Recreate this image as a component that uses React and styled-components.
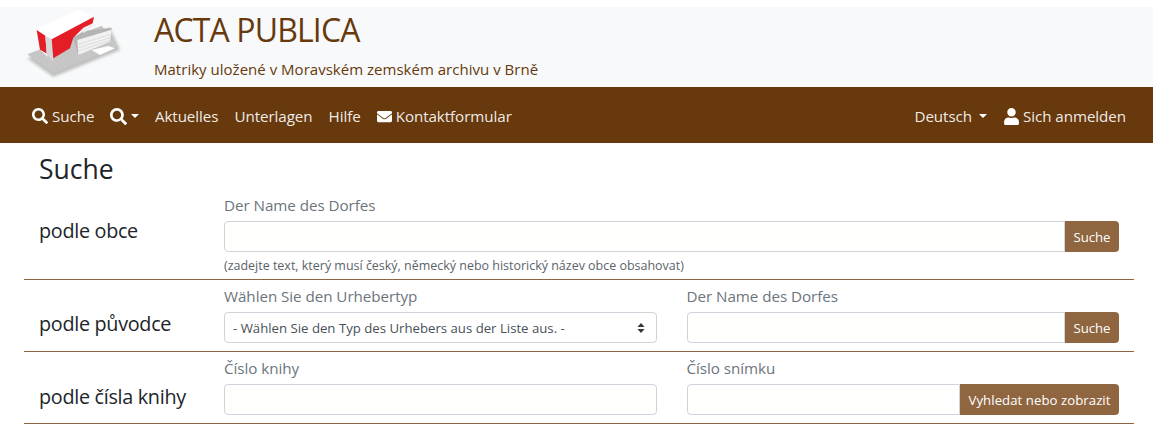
import React from "react";
import styled, { createGlobalStyle } from "styled-components";
import { FaSearch, FaEnvelope, FaUser } from "react-icons/fa";

const Global = createGlobalStyle`
  html, body { margin: 0; padding: 0; background: #fff; }
  body { font-family: "Open Sans", "Noto Sans", sans-serif; font-size: 16px; color: #212529; overflow: hidden; }
  * { box-sizing: border-box; }
`;
const Page = styled.div`width: 1153px; height: 432px; padding-top: 7px; overflow: hidden;`;
const Header = styled.header`height: 80px; background: #f8f9fa; display: flex; padding-left: 20px;`;
const LogoBox = styled.div`width: 134px; height: 80px; flex: none;`;
const Brand = styled.div`color: #67390d; padding-top: 2px;`;
const Title = styled.h1`margin: 0; font-size: 32px; line-height: 42px; font-weight: 400; letter-spacing: -0.85px;`;
const Sub = styled.div`font-size: 15px; line-height: 20px; margin-top: 8px; letter-spacing: 0.02px;`;
const Nav = styled.nav`height: 56px; background: #67390d; display: flex; align-items: center; justify-content: space-between; padding: 2px 27px 0 32px; color: #fff;`;
const NavGroup = styled.div`display: flex; align-items: center; gap: 16px;`;
const NavItem = styled.a`display: flex; align-items: center; gap: ${p => p.$gap ?? 4}px; font-size: 15.2px; letter-spacing: -0.08px; color: rgba(255,255,255,.92); white-space: nowrap;
  svg { font-size: ${p => p.$icon || 16}px; color: #fff; }`;
const Caret = styled.span`display: inline-block; margin-left: ${p => p.$gap || 0}px; border-top: 4.8px solid #fff; border-left: 4.8px solid transparent; border-right: 4.8px solid transparent;`;
const Main = styled.main`padding: 0 19px 0 24px;`;
const H2 = styled.h2`margin: 0; padding-left: 15px; font-size: 26.5px; line-height: 36px; font-weight: 400; padding-top: 8px; height: 45px;`;
const Row = styled.section`display: flex; height: ${p => p.$h}px; border-bottom: 1px solid #8f6640; width: 1110px;`;
const RowTitle = styled.div`width: 200px; flex: none; padding: ${p => p.$top}px 0 0 15px; font-size: 19.8px; line-height: 26px; letter-spacing: -0.3px;`;
const Fields = styled.div`flex: 1; display: flex; gap: 30px; padding-right: 15px;`;
const Field = styled.div`flex: 1 1 0; min-width: 0; padding-top: ${p => p.$top}px;`;
const Label = styled.div`font-size: 15.2px; line-height: 20px; color: #6c757d; letter-spacing: -0.05px; margin-bottom: 6px;`;
const InputGroup = styled.div`display: flex; height: 31px;`;
const Input = styled.input`flex: 1; min-width: 0; height: 31px; width: ${p => p.$alone ? "100%" : "auto"}; display: block; border: 1px solid #ced4da; border-radius: ${p => p.$alone ? "4px" : "4px 0 0 4px"}; background: #fffffd; padding: 0 8px;`;
const Btn = styled.button`flex: none; height: 31px; padding: 0 8.5px; border: 0; border-radius: 0 4px 4px 0; background: #8f6640; color: #fff; font: inherit; font-size: 13.2px; letter-spacing: ${p => p.$ls ?? -0.03}px;`;
const Select = styled.div`height: 31px; border: 1px solid #ced4da; border-radius: 4px; background: #fff; display: flex; align-items: center; justify-content: space-between; padding: 0 11px 0 8px; font-size: 13.2px; color: #495057;`;
const Help = styled.small`display: block; font-size: 12.48px; line-height: 14px; margin-top: 7px; color: #5b636a;`;

const Logo = () => (
  <svg width="110" height="80" viewBox="0 6 330 240">
    <defs><filter id="b" x="-20%" y="-20%" width="140%" height="140%"><feGaussianBlur stdDeviation="5" /></filter></defs>
    <path d="M22 160 L100 216 L300 135 L270 70 Z" fill="#777" opacity=".45" filter="url(#b)" />
    <path d="M22 148 L100 205 L295 125 L245 62 Z" fill="#c6c6c6" />
    <path d="M160 100 L190 78 L275 68 L270 110 L175 150 Z" fill="#b4b4b4" />
    <path d="M172 105 L275 74 L270 110 L175 150 Z" fill="#f1f1f1" />
    <path d="M176 118 L272 88 M176 128 L271 98 M176 138 L270 106" stroke="#c9c9c9" strokeWidth="1.5" />
    <path d="M182 78 L212 56 L222 60 L192 84 Z" fill="#ececec" />
    <path d="M215 135 L265 123 L285 130 L240 150 Z" fill="#fff" />
    <path d="M50 72 L175 15 L222 35 L95 103 Z" fill="#fff" />
    <path d="M50 75 L76 92 L80 146 L60 134 Z" fill="#e31e26" />
    <path d="M76 92 L95 103 L100 172 L80 146 Z" fill="#d8d8d8" />
    <path d="M60 134 L80 146 L84 156 Z" fill="#fff" />
    <path d="M95 103 L222 35 L218 55 L190 68 L160 98 L150 130 L100 160 Z" fill="#e31e26" />
  </svg>
);

export default function App() {
  return (
    <Page>
      <Global />
      <Header>
        <LogoBox><Logo /></LogoBox>
        <Brand>
          <Title>ACTA PUBLICA</Title>
          <Sub>Matriky uložené v Moravském zemském archivu v Brně</Sub>
        </Brand>
      </Header>
      <Nav>
        <NavGroup>
          <NavItem><FaSearch />Suche</NavItem>
          <NavItem $icon={17} $gap={3.5}><FaSearch /><Caret /></NavItem>
          <NavItem>Aktuelles</NavItem>
          <NavItem>Unterlagen</NavItem>
          <NavItem>Hilfe</NavItem>
          <NavItem $icon={15}><FaEnvelope />Kontaktformular</NavItem>
        </NavGroup>
        <NavGroup>
          <NavItem>Deutsch<Caret $gap={3} /></NavItem>
          <NavItem $icon={17} $gap={3}><FaUser />Sich anmelden</NavItem>
        </NavGroup>
      </Nav>
      <Main>
        <H2>Suche</H2>
        <Row $h={92}>
          <RowTitle $top={30}>podle obce</RowTitle>
          <Fields>
            <Field $top={7}>
              <Label>Der Name des Dorfes</Label>
              <InputGroup><Input /><Btn>Suche</Btn></InputGroup>
              <Help>(zadejte text, který musí český, německý nebo historický název obce obsahovat)</Help>
            </Field>
          </Fields>
        </Row>
        <Row $h={72}>
          <RowTitle $top={31}>podle původce</RowTitle>
          <Fields>
            <Field $top={6}>
              <Label>Wählen Sie den Urhebertyp</Label>
              <Select>- Wählen Sie den Typ des Urhebers aus der Liste aus. -
                <svg width="8" height="12" viewBox="0 0 8 12"><path d="M4 1 L7.6 5 H.4 Z M4 11 L.4 7 H7.6 Z" fill="#343a40" /></svg>
              </Select>
            </Field>
            <Field $top={6}>
              <Label>Der Name des Dorfes</Label>
              <InputGroup><Input /><Btn>Suche</Btn></InputGroup>
            </Field>
          </Fields>
        </Row>
        <Row $h={72}>
          <RowTitle $top={32}>podle čísla knihy</RowTitle>
          <Fields>
            <Field $top={6}>
              <Label>Číslo knihy</Label>
              <Input $alone />
            </Field>
            <Field $top={6}>
              <Label>Číslo snímku</Label>
              <InputGroup><Input /><Btn $ls={0.05}>Vyhledat nebo zobrazit</Btn></InputGroup>
            </Field>
          </Fields>
        </Row>
      </Main>
    </Page>
  );
}
